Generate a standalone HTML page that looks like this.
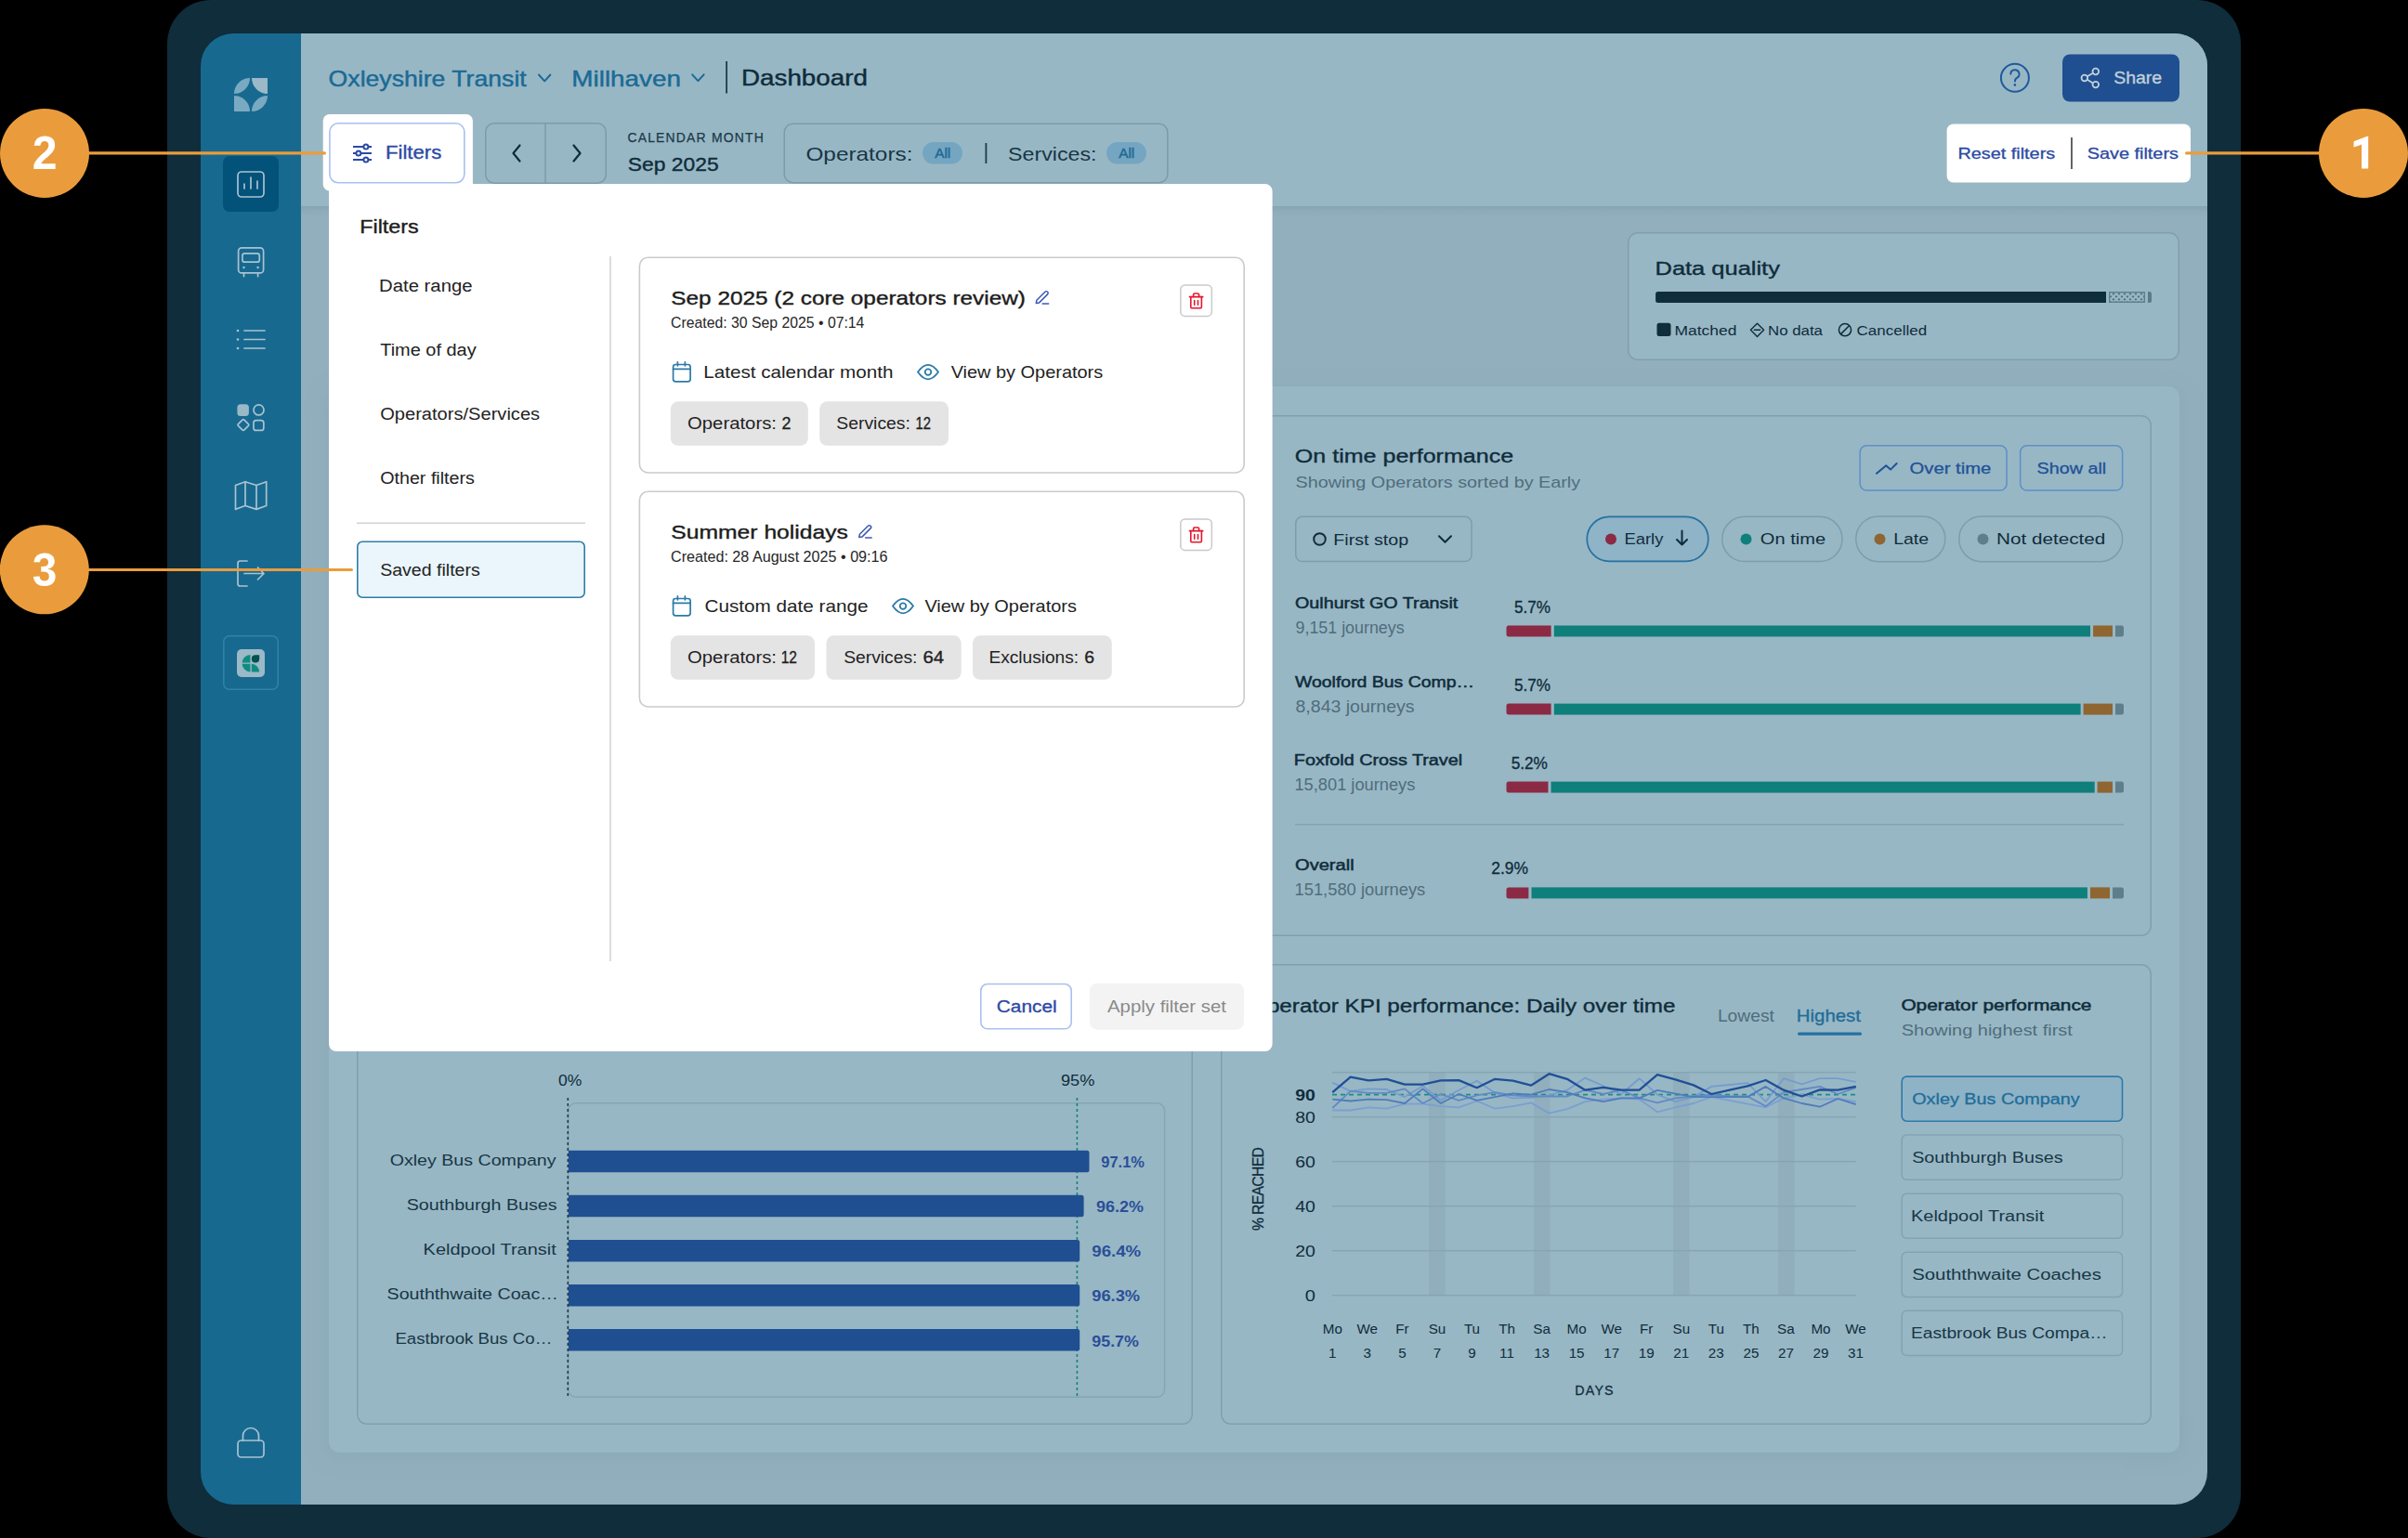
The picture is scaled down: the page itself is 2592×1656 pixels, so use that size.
<!DOCTYPE html>
<html><head><meta charset="utf-8"><title>Dashboard</title>
<style>html,body{margin:0;padding:0;background:#000;overflow:hidden}svg{display:block}text{font-family:"Liberation Sans",sans-serif;white-space:pre}</style>
</head><body>
<svg width="2592" height="1656" viewBox="0 0 2592 1656">
<rect x="180" y="0" width="2232" height="1656" rx="47" fill="#0f2d3a"/>
<defs><clipPath id="app"><rect x="216" y="36" width="2160" height="1584" rx="35"/></clipPath><linearGradient id="hsh" x1="0" y1="0" x2="0" y2="1"><stop offset="0" stop-color="#7f9dab" stop-opacity="0.6"/><stop offset="1" stop-color="#93b0bd" stop-opacity="0"/></linearGradient><filter id="psh" x="-5%" y="-5%" width="110%" height="110%"><feGaussianBlur stdDeviation="10"/></filter></defs>
<g clip-path="url(#app)">
<rect x="216" y="36" width="108" height="1584" rx="0" fill="#186990"/>
<rect x="324" y="36" width="2052" height="1584" rx="0" fill="#91afbd"/>
<rect x="324" y="36" width="2052" height="186" rx="0" fill="#98b7c5"/>
<rect x="324" y="222" width="2052" height="14" rx="0" fill="url(#hsh)"/>
<rect x="350" y="420" width="2000" height="1150" rx="12" fill="#86a4b1" filter="url(#psh)" opacity="0.5"/>
<rect x="354" y="416" width="1992" height="1148" rx="12" fill="#98b7c5"/>
<rect x="1752.75" y="250.75" width="592.5" height="136.5" rx="10.25" fill="#98b7c5" stroke="#80a0ae" stroke-width="1.5"/>
<rect x="384.75" y="447.75" width="1930.5" height="559.5" rx="10.25" fill="#98b7c5" stroke="#80a0ae" stroke-width="1.5"/>
<rect x="384.75" y="1038.75" width="898.5" height="494.5" rx="10.25" fill="#98b7c5" stroke="#80a0ae" stroke-width="1.5"/>
<rect x="1314.75" y="1038.75" width="1000.5" height="494.5" rx="10.25" fill="#98b7c5" stroke="#80a0ae" stroke-width="1.5"/>
<rect x="240" y="168" width="60" height="60" rx="7" fill="#02527a"/>
<path d="M252,101 A17 17 0 0 1 269,84 A17 17 0 0 1 252,101Z" fill="#79aac2"/>
<path d="M271,84 H288 V101 A17 17 0 0 1 271,84Z" fill="#9bb9c7"/>
<path d="M252,103 A17 17 0 0 1 269,120 H252Z" fill="#79aac2"/>
<path d="M271,120 A17 17 0 0 1 288,103 A17 17 0 0 1 271,120Z" fill="#79aac2"/>
<g fill="none" stroke="#a9c3d0" stroke-width="1.7" stroke-linecap="round" stroke-linejoin="round"><rect x="256" y="185" width="28" height="27" rx="4"/><path d="M263 203 V198 M270 203 V191 M277 203 V195"/></g>
<g fill="none" stroke="#a9c3d0" stroke-width="1.7" stroke-linecap="round" stroke-linejoin="round"><rect x="256.6" y="266.9" width="27" height="27" rx="3.5"/><rect x="260.9" y="272.9" width="18.4" height="9.3" rx="2.5"/><path d="M262.5 297.6 V294.5 M277.6 297.6 V294.5"/></g>
<circle cx="262.5" cy="288" r="1.2" fill="#a9c3d0"/><circle cx="277.6" cy="288" r="1.2" fill="#a9c3d0"/>
<g fill="none" stroke="#a9c3d0" stroke-width="1.7" stroke-linecap="round" stroke-linejoin="round"><path d="M263 356 H285 M263 365.5 H285 M263 375 H285"/></g>
<circle cx="256" cy="356" r="1.3" fill="#a9c3d0"/><circle cx="256" cy="365.5" r="1.3" fill="#a9c3d0"/><circle cx="256" cy="375" r="1.3" fill="#a9c3d0"/>
<rect x="255.4" y="435.2" width="12.5" height="12.7" rx="3.5" fill="#9ab8c6"/>
<g fill="none" stroke="#a9c3d0" stroke-width="1.7" stroke-linecap="round" stroke-linejoin="round"><circle cx="278.5" cy="441.4" r="5.5"/><rect x="272.95" y="452.65" width="10.9" height="10.8" rx="2.8"/><path d="M261.9 451.6 Q262.4 451.6 262.9 452.1 L267.4 456.6 Q268.2 457.5 267.4 458.4 L262.9 462.9 Q261.9 463.9 260.9 462.9 L256.4 458.4 Q255.6 457.5 256.4 456.6 L260.9 452.1 Q261.4 451.6 261.9 451.6Z"/></g>
<g fill="none" stroke="#a9c3d0" stroke-width="1.7" stroke-linecap="round" stroke-linejoin="round"><path d="M253.5 522.5 L264 518.7 L276 522.5 L286.7 518.7 V544.5 L276 548.4 L264 544.5 L253.5 548.4Z M264 518.7 V544.5 M276 522.5 V548.4"/></g>
<g fill="none" stroke="#a9c3d0" stroke-width="1.7" stroke-linecap="round" stroke-linejoin="round"><path d="M266 604 H258.5 Q256 604 256 606.5 V628.5 Q256 631 258.5 631 H266 M263 617.5 H284 M277.5 611 L284 617.5 L277.5 624"/></g>
<rect x="240.75" y="684.75" width="58.5" height="57.5" rx="6.25" fill="none" stroke="#2f83ab" stroke-width="1.5"/>
<rect x="255" y="699" width="30" height="30" rx="5" fill="#9bb9c7"/>
<path d="M269.4 705 A9 9 0 0 0 260.6 713.6 H269.4Z M269.4 723.4 A9 9 0 0 1 260.6 714.8 H269.4Z M270.8 714.8 A8.6 8.6 0 0 1 279.2 723.4 H270.8Z" fill="#0f8c82"/>
<path d="M279.2 705.2 V709.5 A4.2 4.2 0 1 1 275 705.2 Z" fill="#03514f"/>
<g fill="none" stroke="#a9c3d0" stroke-width="1.7" stroke-linecap="round" stroke-linejoin="round"><rect x="256" y="1551" width="28" height="18" rx="3.5"/><path d="M261.5 1551 V1546 A8.5 8.5 0 0 1 278.5 1546 V1551"/></g>
</g>
<text x="353.61" y="93.10" font-size="24.31" fill="#1b6a94" stroke="#1b6a94" stroke-width="0.44" textLength="213.12" lengthAdjust="spacingAndGlyphs">Oxleyshire Transit</text>
<path d="M580 80.5 L586.2 87.3 L592.4 80.5" fill="none" stroke="#1b6a94" stroke-width="2" stroke-linecap="round" stroke-linejoin="round"/>
<text x="615.31" y="92.80" font-size="24.31" fill="#1b6a94" stroke="#1b6a94" stroke-width="0.44" textLength="117.73" lengthAdjust="spacingAndGlyphs">Millhaven</text>
<path d="M745.2 80.3 L751.4 87.1 L757.6 80.3" fill="none" stroke="#1b6a94" stroke-width="2" stroke-linecap="round" stroke-linejoin="round"/>
<rect x="781.2" y="66" width="1.8" height="34.5" rx="0" fill="#1b3c4b"/>
<text x="798.04" y="92.20" font-size="24.61" fill="#0f2c3a" stroke="#0f2c3a" stroke-width="0.44" textLength="135.83" lengthAdjust="spacingAndGlyphs">Dashboard</text>
<circle cx="2168.9" cy="83.8" r="15" fill="none" stroke="#1f5a9c" stroke-width="2"/>
<path d="M2164.3 79.6 A4.6 4.6 0 1 1 2170.8 84 Q2168.9 85 2168.9 87.6" fill="none" stroke="#1f5a9c" stroke-width="2" stroke-linecap="round"/>
<circle cx="2168.9" cy="91.4" r="1.3" fill="#1f5a9c"/>
<rect x="2220" y="58.5" width="126" height="51" rx="8" fill="#1f4f90"/>
<g fill="none" stroke="#c3d0da" stroke-width="1.8"><circle cx="2255.8" cy="77" r="3.3"/><circle cx="2255.8" cy="91.1" r="3.3"/><circle cx="2243.8" cy="84" r="3.3"/><path d="M2246.7 82.3 L2252.9 78.7 M2246.7 85.7 L2252.9 89.4"/></g>
<text x="2275.20" y="89.60" font-size="18.38" fill="#c3d0da" stroke="#c3d0da" stroke-width="0.33" textLength="52.03" lengthAdjust="spacingAndGlyphs">Share</text>
<rect x="522.75" y="132.75" width="129.5" height="64.5" rx="9.25" fill="none" stroke="#7c9baa" stroke-width="1.5"/>
<rect x="586.3" y="132.5" width="1.5" height="65" rx="0" fill="#7c9baa"/>
<path d="M559.5 156.5 L552.5 165 L559.5 173.5 M617.5 156.5 L624.5 165 L617.5 173.5" fill="none" stroke="#0f2c3a" stroke-width="2.2" stroke-linecap="round" stroke-linejoin="round"/>
<text x="675.40" y="152.90" font-size="13.94" fill="#1b3a48" stroke="#1b3a48" stroke-width="0.25" textLength="146.35" lengthAdjust="spacing">CALENDAR MONTH</text>
<text x="675.80" y="184.30" font-size="20.90" fill="#0f2c3a" stroke="#0f2c3a" stroke-width="0.38" textLength="97.88" lengthAdjust="spacingAndGlyphs">Sep 2025</text>
<rect x="844.25" y="133.25" width="412.5999999999999" height="63.5" rx="9.25" fill="none" stroke="#7c9baa" stroke-width="1.5"/>
<text x="867.40" y="172.80" font-size="20.90" fill="#173644" textLength="115.10" lengthAdjust="spacingAndGlyphs">Operators:</text>
<rect x="993" y="153" width="43" height="23.6" rx="11.8" fill="#74a6c1"/>
<text x="1006.20" y="169.90" font-size="13.94" fill="#1f6a95" stroke="#1f6a95" stroke-width="0.42" textLength="17.10" lengthAdjust="spacingAndGlyphs">All</text>
<rect x="1060.5" y="154" width="1.8" height="22" rx="0" fill="#1b3c4b"/>
<text x="1085.00" y="172.80" font-size="20.90" fill="#173644" textLength="95.51" lengthAdjust="spacingAndGlyphs">Services:</text>
<rect x="1191" y="153" width="43" height="23.6" rx="11.8" fill="#74a6c1"/>
<text x="1204.20" y="169.90" font-size="13.94" fill="#1f6a95" stroke="#1f6a95" stroke-width="0.42" textLength="17.10" lengthAdjust="spacingAndGlyphs">All</text>
<rect x="2095.6" y="133.4" width="262.4" height="63.1" rx="7" fill="#fff"/>
<text x="2107.45" y="170.90" font-size="17.20" fill="#2c4aa3" stroke="#2c4aa3" stroke-width="0.31" textLength="104.74" lengthAdjust="spacingAndGlyphs">Reset filters</text>
<rect x="2229.2" y="148" width="1.5" height="34" rx="0" fill="#333"/>
<text x="2246.70" y="170.90" font-size="17.20" fill="#2c4aa3" stroke="#2c4aa3" stroke-width="0.31" textLength="98.29" lengthAdjust="spacingAndGlyphs">Save filters</text>
<text x="1781.52" y="295.90" font-size="19.87" fill="#0f2c3a" stroke="#0f2c3a" stroke-width="0.36" textLength="134.39" lengthAdjust="spacingAndGlyphs">Data quality</text>
<path d="M1784.6 314 H2267 V326 H1784.6 A2.5 2.5 0 0 1 1782.1 323.5 V316.5 A2.5 2.5 0 0 1 1784.6 314Z" fill="#0f2d3b"/>
<defs><pattern id="dots" x="2273.9" y="315.6" width="6" height="6" patternUnits="userSpaceOnUse"><rect width="6" height="6" fill="#98b7c5"/><rect x="0" y="0" width="2.1" height="1.4" fill="#35535f"/><rect x="3" y="3" width="2.1" height="1.4" fill="#35535f"/></pattern></defs>
<rect x="2270.7" y="314.7" width="37.6" height="10.6" rx="0" fill="url(#dots)" stroke="#5f7f8c" stroke-width="1.4"/>
<path d="M2312 314 H2313.5 A2.5 2.5 0 0 1 2316 316.5 V323.5 A2.5 2.5 0 0 1 2313.5 326 H2312Z" fill="#5a7a87"/>
<rect x="1783.5" y="347.7" width="15" height="14.3" rx="2.5" fill="#0f2d3b"/>
<text x="1802.50" y="360.70" font-size="14.53" fill="#0f2c3a" textLength="66.89" lengthAdjust="spacingAndGlyphs">Matched</text>
<path d="M1891.5 348.2 L1898.6 355.3 L1891.5 362.4 L1884.4 355.3Z M1887.8 355.3 H1895.2" fill="none" stroke="#0f2c3a" stroke-width="1.4" stroke-linejoin="round"/>
<text x="1903.04" y="360.70" font-size="14.53" fill="#0f2c3a" textLength="58.88" lengthAdjust="spacingAndGlyphs">No data</text>
<circle cx="1986" cy="355.2" r="6.6" fill="none" stroke="#0f2c3a" stroke-width="1.5"/><path d="M1981.6 359.6 L1990.4 350.8" stroke="#0f2c3a" stroke-width="1.5"/>
<text x="1998.60" y="360.70" font-size="14.53" fill="#0f2c3a" textLength="75.49" lengthAdjust="spacingAndGlyphs">Cancelled</text>
<text x="1393.80" y="497.90" font-size="19.57" fill="#0f2c3a" stroke="#0f2c3a" stroke-width="0.35" textLength="235.32" lengthAdjust="spacingAndGlyphs">On time performance</text>
<text x="1394.50" y="524.80" font-size="17.35" fill="#4f6d7b" textLength="306.62" lengthAdjust="spacingAndGlyphs">Showing Operators sorted by Early</text>
<rect x="2002.15" y="479.65" width="157.9000000000001" height="48.39999999999998" rx="7.25" fill="none" stroke="#5f8fc6" stroke-width="1.5"/>
<path d="M2020 509.8 L2030.2 501.3 L2035 505.6 L2041.6 499" fill="none" stroke="#1f5298" stroke-width="2" stroke-linecap="round" stroke-linejoin="round"/>
<text x="2055.60" y="509.60" font-size="16.75" fill="#1f5298" stroke="#1f5298" stroke-width="0.30" textLength="87.68" lengthAdjust="spacingAndGlyphs">Over time</text>
<rect x="2174.65" y="479.65" width="110.0" height="48.39999999999998" rx="7.25" fill="none" stroke="#5f8fc6" stroke-width="1.5"/>
<text x="2192.60" y="509.60" font-size="16.75" fill="#1f5298" stroke="#1f5298" stroke-width="0.30" textLength="74.65" lengthAdjust="spacingAndGlyphs">Show all</text>
<rect x="1394.75" y="556.35" width="189.29999999999995" height="48.19999999999993" rx="7.25" fill="none" stroke="#7e9dab" stroke-width="1.5"/>
<circle cx="1420.5" cy="580.5" r="6.3" fill="#8fadba" stroke="#0f2c3a" stroke-width="2"/>
<text x="1435.36" y="586.50" font-size="17.20" fill="#0f2c3a" textLength="80.68" lengthAdjust="spacingAndGlyphs">First stop</text>
<path d="M1549 577.2 L1555.5 583.7 L1562 577.2" fill="none" stroke="#0f2c3a" stroke-width="2" stroke-linecap="round" stroke-linejoin="round"/>
<rect x="1708.25" y="556.45" width="130.59999999999997" height="47.99999999999993" rx="23.95" fill="#8fb3c7" stroke="#2671a0" stroke-width="1.7"/>
<circle cx="1734" cy="580.5" r="6" fill="#8b2a44"/>
<text x="1748.41" y="586.30" font-size="16.90" fill="#0f2c3a" textLength="41.99" lengthAdjust="spacingAndGlyphs">Early</text>
<path d="M1810.5 571.5 V586.5 M1805 581 L1810.5 586.5 L1816 581" fill="none" stroke="#0f2c3a" stroke-width="2" stroke-linecap="round" stroke-linejoin="round"/>
<rect x="1853.75" y="556.35" width="129.20000000000005" height="48.19999999999993" rx="24.05" fill="none" stroke="#7e9dab" stroke-width="1.5"/>
<circle cx="1879.5" cy="580.5" r="6" fill="#0f7f7b"/>
<text x="1894.80" y="586.30" font-size="16.90" fill="#0f2c3a" textLength="70.27" lengthAdjust="spacingAndGlyphs">On time</text>
<rect x="1997.75" y="556.05" width="96.0" height="48.60000000000002" rx="24.05" fill="none" stroke="#7e9dab" stroke-width="1.5"/>
<circle cx="2023.5" cy="580.5" r="6" fill="#8f6531"/>
<text x="2038.15" y="586.30" font-size="16.90" fill="#0f2c3a" textLength="37.91" lengthAdjust="spacingAndGlyphs">Late</text>
<rect x="2108.75" y="556.05" width="175.9000000000001" height="48.60000000000002" rx="24.05" fill="none" stroke="#7e9dab" stroke-width="1.5"/>
<circle cx="2134.5" cy="580.5" r="6" fill="#5f7e8b"/>
<text x="2149.08" y="586.30" font-size="16.90" fill="#0f2c3a" textLength="117.21" lengthAdjust="spacingAndGlyphs">Not detected</text>
<text x="1394.00" y="655.00" font-size="16.75" fill="#0f2c3a" stroke="#0f2c3a" stroke-width="0.50" textLength="175.29" lengthAdjust="spacingAndGlyphs">Oulhurst GO Transit</text>
<text x="1394.50" y="682.40" font-size="17.94" fill="#4f6d7b" textLength="117.16" lengthAdjust="spacingAndGlyphs">9,151 journeys</text>
<text x="1630.00" y="660.00" font-size="17.94" fill="#0f2c3a" stroke="#0f2c3a" stroke-width="0.32" textLength="38.94" lengthAdjust="spacingAndGlyphs">5.7%</text>
<path d="M1624.0 673.5 H1669.6 V685.5 H1624.0 A2.5 2.5 0 0 1 1621.5 683.0 V676.0 A2.5 2.5 0 0 1 1624.0 673.5Z" fill="#8b2a44"/>
<rect x="1672.8" y="673.5" width="577.2" height="12" rx="0" fill="#0f7f7b"/>
<rect x="2253.1" y="673.5" width="20.90000000000009" height="12" rx="0" fill="#8f6531"/>
<path d="M2277.0 673.5 H2283.5 A2.5 2.5 0 0 1 2286.0 676.0 V683.0 A2.5 2.5 0 0 1 2283.5 685.5 H2277.0Z" fill="#5f7e8b"/>
<text x="1394.00" y="739.60" font-size="16.75" fill="#0f2c3a" stroke="#0f2c3a" stroke-width="0.50" textLength="193.03" lengthAdjust="spacingAndGlyphs">Woolford Bus Comp…</text>
<text x="1394.50" y="766.60" font-size="17.94" fill="#4f6d7b" textLength="128.06" lengthAdjust="spacingAndGlyphs">8,843 journeys</text>
<text x="1630.00" y="744.30" font-size="17.94" fill="#0f2c3a" stroke="#0f2c3a" stroke-width="0.32" textLength="38.94" lengthAdjust="spacingAndGlyphs">5.7%</text>
<path d="M1624.0 757.6 H1669.6 V769.6 H1624.0 A2.5 2.5 0 0 1 1621.5 767.1 V760.1 A2.5 2.5 0 0 1 1624.0 757.6Z" fill="#8b2a44"/>
<rect x="1672.8" y="757.6" width="566.8" height="12" rx="0" fill="#0f7f7b"/>
<rect x="2242.6" y="757.6" width="31.40000000000009" height="12" rx="0" fill="#8f6531"/>
<path d="M2277.0 757.6 H2283.5 A2.5 2.5 0 0 1 2286.0 760.1 V767.1 A2.5 2.5 0 0 1 2283.5 769.6 H2277.0Z" fill="#5f7e8b"/>
<text x="1392.82" y="823.60" font-size="16.75" fill="#0f2c3a" stroke="#0f2c3a" stroke-width="0.50" textLength="181.33" lengthAdjust="spacingAndGlyphs">Foxfold Cross Travel</text>
<text x="1393.48" y="850.80" font-size="17.94" fill="#4f6d7b" textLength="129.88" lengthAdjust="spacingAndGlyphs">15,801 journeys</text>
<text x="1626.70" y="828.30" font-size="17.94" fill="#0f2c3a" stroke="#0f2c3a" stroke-width="0.32" textLength="39.24" lengthAdjust="spacingAndGlyphs">5.2%</text>
<path d="M1624.0 841.6 H1666.5 V853.6 H1624.0 A2.5 2.5 0 0 1 1621.5 851.1 V844.1 A2.5 2.5 0 0 1 1624.0 841.6Z" fill="#8b2a44"/>
<rect x="1669.5" y="841.6" width="585.1999999999998" height="12" rx="0" fill="#0f7f7b"/>
<rect x="2257.6" y="841.6" width="16.40000000000009" height="12" rx="0" fill="#8f6531"/>
<path d="M2277.0 841.6 H2283.5 A2.5 2.5 0 0 1 2286.0 844.1 V851.1 A2.5 2.5 0 0 1 2283.5 853.6 H2277.0Z" fill="#5f7e8b"/>
<text x="1394.00" y="936.80" font-size="16.75" fill="#0f2c3a" stroke="#0f2c3a" stroke-width="0.50" textLength="63.67" lengthAdjust="spacingAndGlyphs">Overall</text>
<text x="1393.48" y="964.40" font-size="17.94" fill="#4f6d7b" textLength="140.78" lengthAdjust="spacingAndGlyphs">151,580 journeys</text>
<text x="1605.30" y="941.10" font-size="17.94" fill="#0f2c3a" stroke="#0f2c3a" stroke-width="0.32" textLength="39.64" lengthAdjust="spacingAndGlyphs">2.9%</text>
<path d="M1624.0 955.4 H1645.4 V967.4 H1624.0 A2.5 2.5 0 0 1 1621.5 964.9 V957.9 A2.5 2.5 0 0 1 1624.0 955.4Z" fill="#8b2a44"/>
<rect x="1648.5" y="955.4" width="598.4000000000001" height="12" rx="0" fill="#0f7f7b"/>
<rect x="2250" y="955.4" width="21" height="12" rx="0" fill="#8f6531"/>
<path d="M2274.0 955.4 H2283.5 A2.5 2.5 0 0 1 2286.0 957.9 V964.9 A2.5 2.5 0 0 1 2283.5 967.4 H2274.0Z" fill="#5f7e8b"/>
<rect x="1394" y="887" width="892" height="1.5" rx="0" fill="#84a3b1"/>
<text x="601.00" y="1168.60" font-size="17.20" fill="#0f2c3a" textLength="25.29" lengthAdjust="spacingAndGlyphs">0%</text>
<text x="1142.00" y="1168.60" font-size="17.20" fill="#0f2c3a" textLength="36.30" lengthAdjust="spacingAndGlyphs">95%</text>
<rect x="611.7" y="1187.7" width="641.9" height="316.6" rx="8.3" fill="none" stroke="#86a5b3" stroke-width="1.4"/>
<path d="M611.3 1182 V1505" stroke="#1f3b48" stroke-width="1.6" stroke-dasharray="3 3"/>
<path d="M1159.4 1182 V1505" stroke="#17827a" stroke-width="1.6" stroke-dasharray="3 3"/>
<path d="M612 1238.8 H1170.0 A2.5 2.5 0 0 1 1172.5 1241.3 V1259.8 A2.5 2.5 0 0 1 1170.0 1262.3 H612Z" fill="#1f4f91"/>
<text x="419.70" y="1254.60" font-size="17.20" fill="#173644" textLength="178.84" lengthAdjust="spacingAndGlyphs">Oxley Bus Company</text>
<text x="1185.30" y="1257.30" font-size="16.75" fill="#2a4f98" font-weight="bold" textLength="46.60" lengthAdjust="spacingAndGlyphs">97.1%</text>
<path d="M612 1286.8 H1164.1 A2.5 2.5 0 0 1 1166.6 1289.3 V1307.8 A2.5 2.5 0 0 1 1164.1 1310.3 H612Z" fill="#1f4f91"/>
<text x="437.70" y="1302.65" font-size="17.20" fill="#173644" textLength="161.98" lengthAdjust="spacingAndGlyphs">Southburgh Buses</text>
<text x="1180.00" y="1305.35" font-size="16.75" fill="#2a4f98" font-weight="bold" textLength="50.89" lengthAdjust="spacingAndGlyphs">96.2%</text>
<path d="M612 1334.9 H1159.7 A2.5 2.5 0 0 1 1162.2 1337.4 V1355.9 A2.5 2.5 0 0 1 1159.7 1358.4 H612Z" fill="#1f4f91"/>
<text x="455.64" y="1350.70" font-size="17.20" fill="#173644" textLength="143.10" lengthAdjust="spacingAndGlyphs">Keldpool Transit</text>
<text x="1175.30" y="1353.40" font-size="16.75" fill="#2a4f98" font-weight="bold" textLength="52.88" lengthAdjust="spacingAndGlyphs">96.4%</text>
<path d="M612 1382.9 H1159.7 A2.5 2.5 0 0 1 1162.2 1385.4 V1403.9 A2.5 2.5 0 0 1 1159.7 1406.4 H612Z" fill="#1f4f91"/>
<text x="416.60" y="1398.75" font-size="17.20" fill="#173644" textLength="184.30" lengthAdjust="spacingAndGlyphs">Souththwaite Coac…</text>
<text x="1175.30" y="1401.45" font-size="16.75" fill="#2a4f98" font-weight="bold" textLength="51.78" lengthAdjust="spacingAndGlyphs">96.3%</text>
<path d="M612 1431.0 H1159.7 A2.5 2.5 0 0 1 1162.2 1433.5 V1452.0 A2.5 2.5 0 0 1 1159.7 1454.5 H612Z" fill="#1f4f91"/>
<text x="425.41" y="1446.80" font-size="17.20" fill="#173644" textLength="168.96" lengthAdjust="spacingAndGlyphs">Eastbrook Bus Co…</text>
<text x="1175.30" y="1449.50" font-size="16.75" fill="#2a4f98" font-weight="bold" textLength="50.59" lengthAdjust="spacingAndGlyphs">95.7%</text>
<text x="1345.00" y="1090.30" font-size="19.72" fill="#0f2c3a" stroke="#0f2c3a" stroke-width="0.35" textLength="458.55" lengthAdjust="spacingAndGlyphs">Operator KPI performance: Daily over time</text>
<text x="1848.91" y="1099.70" font-size="17.64" fill="#4f6d7b" textLength="60.98" lengthAdjust="spacingAndGlyphs">Lowest</text>
<text x="1933.84" y="1099.70" font-size="17.64" fill="#1f6d98" stroke="#1f6d98" stroke-width="0.32" textLength="69.04" lengthAdjust="spacingAndGlyphs">Highest</text>
<rect x="1935" y="1111.5" width="69" height="3.2" rx="1.5" fill="#2671a0"/>
<text x="2046.40" y="1087.80" font-size="17.20" fill="#0f2c3a" stroke="#0f2c3a" stroke-width="0.52" textLength="205.08" lengthAdjust="spacingAndGlyphs">Operator performance</text>
<text x="2046.80" y="1114.60" font-size="16.90" fill="#4f6d7b" textLength="184.04" lengthAdjust="spacingAndGlyphs">Showing highest first</text>
<rect x="2047.2" y="1159.1" width="237.3000000000001" height="48.100000000000044" rx="5.2" fill="#8eb3c7" stroke="#2e7aa8" stroke-width="1.6"/>
<text x="2058.20" y="1189.20" font-size="16.46" fill="#1f6d98" stroke="#1f6d98" stroke-width="0.30" textLength="180.56" lengthAdjust="spacingAndGlyphs">Oxley Bus Company</text>
<rect x="2047.15" y="1222.1" width="237.4000000000001" height="48.200000000000045" rx="5.25" fill="none" stroke="#84a3b1" stroke-width="1.5"/>
<text x="2058.20" y="1252.25" font-size="16.46" fill="#173644" textLength="162.46" lengthAdjust="spacingAndGlyphs">Southburgh Buses</text>
<rect x="2047.15" y="1285.1499999999999" width="237.4000000000001" height="48.200000000000045" rx="5.25" fill="none" stroke="#84a3b1" stroke-width="1.5"/>
<text x="2056.99" y="1315.30" font-size="16.46" fill="#173644" textLength="143.29" lengthAdjust="spacingAndGlyphs">Keldpool Transit</text>
<rect x="2047.15" y="1348.1999999999998" width="237.4000000000001" height="48.200000000000045" rx="5.25" fill="none" stroke="#84a3b1" stroke-width="1.5"/>
<text x="2058.20" y="1378.35" font-size="16.46" fill="#173644" textLength="203.67" lengthAdjust="spacingAndGlyphs">Souththwaite Coaches</text>
<rect x="2047.15" y="1411.25" width="237.4000000000001" height="48.200000000000045" rx="5.25" fill="none" stroke="#84a3b1" stroke-width="1.5"/>
<text x="2057.03" y="1441.40" font-size="16.46" fill="#173644" textLength="211.35" lengthAdjust="spacingAndGlyphs">Eastbrook Bus Compa…</text>
<rect x="1538" y="1154.6" width="17.6" height="240.1" rx="0" fill="#90aebc"/>
<rect x="1651" y="1154.6" width="17.6" height="240.1" rx="0" fill="#90aebc"/>
<rect x="1801" y="1154.6" width="17.6" height="240.1" rx="0" fill="#90aebc"/>
<rect x="1914" y="1154.6" width="17.6" height="240.1" rx="0" fill="#90aebc"/>
<rect x="1433.7" y="1153.95" width="564" height="1.4" rx="0" fill="#86a5b3"/>
<rect x="1433.7" y="1201.96" width="564" height="1.4" rx="0" fill="#86a5b3"/>
<rect x="1433.7" y="1249.97" width="564" height="1.4" rx="0" fill="#86a5b3"/>
<rect x="1433.7" y="1297.98" width="564" height="1.4" rx="0" fill="#86a5b3"/>
<rect x="1433.7" y="1345.99" width="564" height="1.4" rx="0" fill="#86a5b3"/>
<rect x="1433.7" y="1394.0" width="564" height="1.4" rx="0" fill="#86a5b3"/>
<text x="1394.20" y="1184.90" font-size="17.20" fill="#0f2c3a" font-weight="bold" textLength="21.63" lengthAdjust="spacingAndGlyphs">90</text>
<text x="1394.20" y="1209.10" font-size="17.20" fill="#0f2c3a" textLength="21.63" lengthAdjust="spacingAndGlyphs">80</text>
<text x="1394.20" y="1257.00" font-size="17.20" fill="#0f2c3a" textLength="21.63" lengthAdjust="spacingAndGlyphs">60</text>
<text x="1394.20" y="1305.00" font-size="17.20" fill="#0f2c3a" textLength="21.63" lengthAdjust="spacingAndGlyphs">40</text>
<text x="1394.20" y="1353.00" font-size="17.20" fill="#0f2c3a" textLength="21.63" lengthAdjust="spacingAndGlyphs">20</text>
<text x="1404.70" y="1400.90" font-size="17.20" fill="#0f2c3a" textLength="11.15" lengthAdjust="spacingAndGlyphs">0</text>
<path d="M1434 1178.6 H1997.6" stroke="#17907f" stroke-width="1.6" stroke-dasharray="5 4"/>
<text x="1434.3" y="1435.6" font-size="15.2" fill="#0f2c3a" text-anchor="middle">Mo</text>
<text x="1434.3" y="1462.3" font-size="15.2" fill="#0f2c3a" text-anchor="middle">1</text>
<text x="1471.8" y="1435.6" font-size="15.2" fill="#0f2c3a" text-anchor="middle">We</text>
<text x="1471.8" y="1462.3" font-size="15.2" fill="#0f2c3a" text-anchor="middle">3</text>
<text x="1509.4" y="1435.6" font-size="15.2" fill="#0f2c3a" text-anchor="middle">Fr</text>
<text x="1509.4" y="1462.3" font-size="15.2" fill="#0f2c3a" text-anchor="middle">5</text>
<text x="1547.0" y="1435.6" font-size="15.2" fill="#0f2c3a" text-anchor="middle">Su</text>
<text x="1547.0" y="1462.3" font-size="15.2" fill="#0f2c3a" text-anchor="middle">7</text>
<text x="1584.5" y="1435.6" font-size="15.2" fill="#0f2c3a" text-anchor="middle">Tu</text>
<text x="1584.5" y="1462.3" font-size="15.2" fill="#0f2c3a" text-anchor="middle">9</text>
<text x="1622.0" y="1435.6" font-size="15.2" fill="#0f2c3a" text-anchor="middle">Th</text>
<text x="1622.0" y="1462.3" font-size="15.2" fill="#0f2c3a" text-anchor="middle">11</text>
<text x="1659.6" y="1435.6" font-size="15.2" fill="#0f2c3a" text-anchor="middle">Sa</text>
<text x="1659.6" y="1462.3" font-size="15.2" fill="#0f2c3a" text-anchor="middle">13</text>
<text x="1697.1" y="1435.6" font-size="15.2" fill="#0f2c3a" text-anchor="middle">Mo</text>
<text x="1697.1" y="1462.3" font-size="15.2" fill="#0f2c3a" text-anchor="middle">15</text>
<text x="1734.7" y="1435.6" font-size="15.2" fill="#0f2c3a" text-anchor="middle">We</text>
<text x="1734.7" y="1462.3" font-size="15.2" fill="#0f2c3a" text-anchor="middle">17</text>
<text x="1772.2" y="1435.6" font-size="15.2" fill="#0f2c3a" text-anchor="middle">Fr</text>
<text x="1772.2" y="1462.3" font-size="15.2" fill="#0f2c3a" text-anchor="middle">19</text>
<text x="1809.8" y="1435.6" font-size="15.2" fill="#0f2c3a" text-anchor="middle">Su</text>
<text x="1809.8" y="1462.3" font-size="15.2" fill="#0f2c3a" text-anchor="middle">21</text>
<text x="1847.3" y="1435.6" font-size="15.2" fill="#0f2c3a" text-anchor="middle">Tu</text>
<text x="1847.3" y="1462.3" font-size="15.2" fill="#0f2c3a" text-anchor="middle">23</text>
<text x="1884.9" y="1435.6" font-size="15.2" fill="#0f2c3a" text-anchor="middle">Th</text>
<text x="1884.9" y="1462.3" font-size="15.2" fill="#0f2c3a" text-anchor="middle">25</text>
<text x="1922.4" y="1435.6" font-size="15.2" fill="#0f2c3a" text-anchor="middle">Sa</text>
<text x="1922.4" y="1462.3" font-size="15.2" fill="#0f2c3a" text-anchor="middle">27</text>
<text x="1960.0" y="1435.6" font-size="15.2" fill="#0f2c3a" text-anchor="middle">Mo</text>
<text x="1960.0" y="1462.3" font-size="15.2" fill="#0f2c3a" text-anchor="middle">29</text>
<text x="1997.5" y="1435.6" font-size="15.2" fill="#0f2c3a" text-anchor="middle">We</text>
<text x="1997.5" y="1462.3" font-size="15.2" fill="#0f2c3a" text-anchor="middle">31</text>
<text x="1695.30" y="1501.50" font-size="14.23" fill="#0f2c3a" stroke="#0f2c3a" stroke-width="0.26" textLength="41.28" lengthAdjust="spacing">DAYS</text>
<text x="1309.00" y="1286.20" font-size="15.72" fill="#0f2c3a" stroke="#0f2c3a" stroke-width="0.28" textLength="89.84" lengthAdjust="spacing" transform="rotate(-90 1354.00 1280.00)">% REACHED</text>
<polyline points="1434.3,1195.5 1453.7,1195.5 1473.2,1192.3 1492.6,1193.6 1512.0,1188.6 1531.5,1188.6 1550.9,1191.1 1570.3,1192.3 1589.7,1185.5 1609.2,1193.6 1628.6,1191.1 1648.0,1187.4 1667.5,1198.6 1686.9,1194.2 1706.3,1186.1 1725.8,1183.6 1745.2,1182.4 1764.6,1183.6 1784.0,1197.3 1803.5,1192.3 1822.9,1188.0 1842.3,1181.1 1861.8,1184.9 1881.2,1188.6 1900.6,1192.3 1920.0,1182.4 1939.5,1178.6 1958.9,1183.6 1978.3,1183.0 1997.8,1186.1" fill="none" stroke="#7b9fd0" stroke-width="1.8" stroke-linejoin="round"/>
<polyline points="1434.3,1165.6 1453.7,1174.9 1473.2,1172.4 1492.6,1173.0 1512.0,1181.1 1531.5,1169.3 1550.9,1184.9 1570.3,1173.7 1589.7,1163.7 1609.2,1176.8 1628.6,1182.4 1648.0,1181.8 1667.5,1179.3 1686.9,1173.7 1706.3,1160.6 1725.8,1169.3 1745.2,1178.0 1764.6,1161.2 1784.0,1178.6 1803.5,1186.1 1822.9,1181.1 1842.3,1169.9 1861.8,1168.0 1881.2,1166.2 1900.6,1186.1 1920.0,1161.2 1939.5,1167.4 1958.9,1161.2 1978.3,1161.2 1997.8,1164.9" fill="none" stroke="#759ccf" stroke-width="1.8" stroke-linejoin="round"/>
<polyline points="1434.3,1193.0 1453.7,1174.9 1473.2,1176.8 1492.6,1176.8 1512.0,1172.4 1531.5,1188.0 1550.9,1178.0 1570.3,1184.9 1589.7,1179.3 1609.2,1176.1 1628.6,1179.3 1648.0,1180.5 1667.5,1180.5 1686.9,1180.5 1706.3,1173.7 1725.8,1178.0 1745.2,1173.7 1764.6,1182.4 1784.0,1187.4 1803.5,1182.4 1822.9,1180.5 1842.3,1178.6 1861.8,1180.5 1881.2,1180.5 1900.6,1191.1 1920.0,1176.1 1939.5,1173.0 1958.9,1169.9 1978.3,1178.0 1997.8,1171.2" fill="none" stroke="#628ac4" stroke-width="1.8" stroke-linejoin="round"/>
<polyline points="1434.3,1183.6 1453.7,1185.5 1473.2,1183.6 1492.6,1184.2 1512.0,1188.0 1531.5,1172.4 1550.9,1188.0 1570.3,1178.0 1589.7,1184.9 1609.2,1181.1 1628.6,1177.4 1648.0,1178.6 1667.5,1173.0 1686.9,1176.1 1706.3,1182.4 1725.8,1186.1 1745.2,1182.4 1764.6,1182.4 1784.0,1173.9 1803.5,1177.6 1822.9,1181.1 1842.3,1181.1 1861.8,1181.1 1881.2,1181.1 1900.6,1169.9 1920.0,1182.4 1939.5,1188.0 1958.9,1191.7 1978.3,1183.0 1997.8,1189.2" fill="none" stroke="#4f7cbb" stroke-width="1.8" stroke-linejoin="round"/>
<polyline points="1434.3,1176.1 1453.7,1159.7 1473.2,1163.4 1492.6,1161.8 1512.0,1167.7 1531.5,1167.7 1550.9,1163.4 1570.3,1163.1 1589.7,1171.2 1609.2,1161.8 1628.6,1163.7 1648.0,1168.7 1667.5,1156.2 1686.9,1161.8 1706.3,1173.7 1725.8,1170.9 1745.2,1173.7 1764.6,1173.7 1784.0,1157.2 1803.5,1162.4 1822.9,1168.4 1842.3,1178.0 1861.8,1173.7 1881.2,1169.3 1900.6,1163.0 1920.0,1173.7 1939.5,1180.5 1958.9,1173.4 1978.3,1173.7 1997.8,1169.9" fill="none" stroke="#1f4f96" stroke-width="2.3" stroke-linejoin="round"/>
<path d="M355 123 H501.9 A7 7 0 0 1 508.9 130 V198 H1361.6 A8 8 0 0 1 1369.6 206 V1124 A8 8 0 0 1 1361.6 1132 H362 A8 8 0 0 1 354 1124 V205.5 H355 A7 7 0 0 1 347.7 198.5 V130 A7 7 0 0 1 354.7 123Z" fill="#fff"/>
<rect x="354.90000000000003" y="132.8" width="144.99999999999997" height="63.99999999999999" rx="9.2" fill="#fff" stroke="#a9c0f0" stroke-width="1.6"/>
<g fill="none" stroke="#2c4aa3" stroke-width="2" stroke-linecap="butt"><path d="M380 157.9 H391.4 M396.4 157.9 H400 M380 164.9 H383.4 M388.4 164.9 H400 M380 171.9 H391.4 M396.4 171.9 H400"/><circle cx="393.9" cy="157.9" r="2.5"/><circle cx="385.9" cy="164.9" r="2.5"/><circle cx="393.9" cy="171.9" r="2.5"/></g>
<text x="414.98" y="170.60" font-size="19.87" fill="#2c4aa3" stroke="#2c4aa3" stroke-width="0.36" textLength="60.34" lengthAdjust="spacingAndGlyphs">Filters</text>
<text x="387.17" y="250.60" font-size="20.76" fill="#1c1c1c" stroke="#1c1c1c" stroke-width="0.37" textLength="63.65" lengthAdjust="spacingAndGlyphs">Filters</text>
<text x="408.07" y="313.70" font-size="17.94" fill="#222" textLength="100.50" lengthAdjust="spacingAndGlyphs">Date range</text>
<text x="409.20" y="383.10" font-size="17.94" fill="#222" textLength="103.46" lengthAdjust="spacingAndGlyphs">Time of day</text>
<text x="409.20" y="452.00" font-size="17.94" fill="#222" textLength="171.96" lengthAdjust="spacingAndGlyphs">Operators/Services</text>
<text x="409.20" y="521.30" font-size="17.94" fill="#222" textLength="101.76" lengthAdjust="spacingAndGlyphs">Other filters</text>
<rect x="384" y="562.5" width="246" height="1.6" rx="0" fill="#d4d4d4"/>
<rect x="384.8" y="583.3" width="244.4" height="59.9" rx="5.2" fill="#eaf6fc" stroke="#2f7ca4" stroke-width="1.6"/>
<text x="409.20" y="619.60" font-size="17.94" fill="#222" textLength="107.56" lengthAdjust="spacingAndGlyphs">Saved filters</text>
<rect x="656.2" y="276" width="1.6" height="759" rx="0" fill="#d4d4d4"/>
<rect x="688.4" y="277.2" width="650.8" height="231.80000000000004" rx="9.2" fill="#fff" stroke="#cbcbcb" stroke-width="1.6"/>
<text x="722.30" y="328.20" font-size="20.90" fill="#1c1c1c" stroke="#1c1c1c" stroke-width="0.38" textLength="381.61" lengthAdjust="spacingAndGlyphs">Sep 2025 (2 core operators review)</text>
<g fill="none" stroke="#3d58b6" stroke-width="1.5" stroke-linejoin="round" stroke-linecap="round"><path d="M1115.3 326.6 L1115.9 323.2 L1124.9 314.2 A1.9 1.9 0 0 1 1127.6 316.9 L1118.6 325.9 Z"/><path d="M1122.1 326.9 H1128.7"/></g>
<rect x="1270.85" y="306.95" width="33.5" height="33.5" rx="4.75" fill="#fff" stroke="#c9c9c9" stroke-width="1.5"/><g fill="none" stroke="#e3172d" stroke-width="1.6" stroke-linecap="round" stroke-linejoin="round"><path d="M1280.4 319.6 H1294.8"/><path d="M1281.8 319.6 V330.4 Q1281.8 331.8 1283.2 331.8 H1292.0 Q1293.4 331.8 1293.4 330.4 V319.6"/><path d="M1284.6 319.6 V317.2 A1.2 1.2 0 0 1 1285.8 316.0 H1289.4 A1.2 1.2 0 0 1 1290.6 317.2 V319.6"/><path d="M1285.7 323.5 V328.2 M1289.5 323.5 V328.2"/></g>
<text x="722.00" y="352.50" font-size="16.60" fill="#262626" textLength="208.42" lengthAdjust="spacingAndGlyphs">Created: 30 Sep 2025 • 07:14</text>
<g fill="none" stroke="#2a7aa8" stroke-width="1.7" stroke-linecap="round"><rect x="724.6" y="392.5" width="18.5" height="18.3" rx="2.6"/><path d="M724.6 397.4 H743.1 M729.4 389.8 V393.8 M737.4 389.8 V393.8"/></g>
<text x="757.32" y="406.70" font-size="17.49" fill="#222" textLength="204.13" lengthAdjust="spacingAndGlyphs">Latest calendar month</text>
<g fill="none" stroke="#2a7aa8" stroke-width="1.8"><path d="M988.0 400.6 Q999.0 385.1 1010.0 400.6 Q999.0 416.1 988.0 400.6 Z"/><circle cx="999.0" cy="400.6" r="3.3"/></g>
<text x="1023.70" y="406.70" font-size="17.49" fill="#222" textLength="163.51" lengthAdjust="spacingAndGlyphs">View by Operators</text>
<rect x="721.8" y="432.3" width="148.0" height="47.5" rx="8" fill="#e4e4e4"/><text x="740.00" y="461.90" font-size="18.09" fill="#1f1f1f" textLength="95.95" lengthAdjust="spacingAndGlyphs">Operators:</text><text x="841.50" y="461.90" font-size="18.09" fill="#1f1f1f" stroke="#1f1f1f" stroke-width="0.33" textLength="9.95" lengthAdjust="spacingAndGlyphs">2</text>
<rect x="882.2" y="432.3" width="138.79999999999995" height="47.5" rx="8" fill="#e4e4e4"/><text x="900.30" y="461.90" font-size="18.09" fill="#1f1f1f" textLength="79.59" lengthAdjust="spacingAndGlyphs">Services:</text><text x="985.58" y="461.90" font-size="18.09" fill="#1f1f1f" stroke="#1f1f1f" stroke-width="0.33" textLength="16.46" lengthAdjust="spacingAndGlyphs">12</text>
<rect x="688.4" y="529.1999999999999" width="650.8" height="231.79999999999998" rx="9.2" fill="#fff" stroke="#cbcbcb" stroke-width="1.6"/>
<text x="722.30" y="580.20" font-size="20.90" fill="#1c1c1c" stroke="#1c1c1c" stroke-width="0.38" textLength="190.63" lengthAdjust="spacingAndGlyphs">Summer holidays</text>
<g fill="none" stroke="#3d58b6" stroke-width="1.5" stroke-linejoin="round" stroke-linecap="round"><path d="M924.8 578.6 L925.4 575.2 L934.4 566.2 A1.9 1.9 0 0 1 937.1 568.9 L928.1 577.9 Z"/><path d="M931.6 578.9 H938.2"/></g>
<rect x="1270.85" y="558.95" width="33.5" height="33.5" rx="4.75" fill="#fff" stroke="#c9c9c9" stroke-width="1.5"/><g fill="none" stroke="#e3172d" stroke-width="1.6" stroke-linecap="round" stroke-linejoin="round"><path d="M1280.4 571.6 H1294.8"/><path d="M1281.8 571.6 V582.4 Q1281.8 583.8 1283.2 583.8 H1292.0 Q1293.4 583.8 1293.4 582.4 V571.6"/><path d="M1284.6 571.6 V569.2 A1.2 1.2 0 0 1 1285.8 568.0 H1289.4 A1.2 1.2 0 0 1 1290.6 569.2 V571.6"/><path d="M1285.7 575.5 V580.2 M1289.5 575.5 V580.2"/></g>
<text x="722.00" y="604.50" font-size="16.60" fill="#262626" textLength="233.52" lengthAdjust="spacingAndGlyphs">Created: 28 August 2025 • 09:16</text>
<g fill="none" stroke="#2a7aa8" stroke-width="1.7" stroke-linecap="round"><rect x="724.6" y="644.5" width="18.5" height="18.3" rx="2.6"/><path d="M724.6 649.4 H743.1 M729.4 641.8 V645.8 M737.4 641.8 V645.8"/></g>
<text x="758.50" y="658.70" font-size="17.49" fill="#222" textLength="175.96" lengthAdjust="spacingAndGlyphs">Custom date range</text>
<g fill="none" stroke="#2a7aa8" stroke-width="1.8"><path d="M961.0 652.6 Q972.0 637.1 983.0 652.6 Q972.0 668.1 961.0 652.6 Z"/><circle cx="972.0" cy="652.6" r="3.3"/></g>
<text x="995.40" y="658.70" font-size="17.49" fill="#222" textLength="163.51" lengthAdjust="spacingAndGlyphs">View by Operators</text>
<rect x="721.8" y="684.3" width="155.20000000000005" height="47.5" rx="8" fill="#e4e4e4"/><text x="740.00" y="713.90" font-size="18.09" fill="#1f1f1f" textLength="95.95" lengthAdjust="spacingAndGlyphs">Operators:</text><text x="840.64" y="713.90" font-size="18.09" fill="#1f1f1f" stroke="#1f1f1f" stroke-width="0.33" textLength="17.31" lengthAdjust="spacingAndGlyphs">12</text>
<rect x="889.5" y="684.3" width="145.20000000000005" height="47.5" rx="8" fill="#e4e4e4"/><text x="908.20" y="713.90" font-size="18.09" fill="#1f1f1f" textLength="79.29" lengthAdjust="spacingAndGlyphs">Services:</text><text x="993.50" y="713.90" font-size="18.09" fill="#1f1f1f" stroke="#1f1f1f" stroke-width="0.33" textLength="22.56" lengthAdjust="spacingAndGlyphs">64</text>
<rect x="1047" y="684.3" width="149.79999999999995" height="47.5" rx="8" fill="#e4e4e4"/><text x="1064.44" y="713.90" font-size="18.09" fill="#1f1f1f" textLength="96.64" lengthAdjust="spacingAndGlyphs">Exclusions:</text><text x="1167.20" y="713.90" font-size="18.09" fill="#1f1f1f" stroke="#1f1f1f" stroke-width="0.33" textLength="10.76" lengthAdjust="spacingAndGlyphs">6</text>
<rect x="1055.8" y="1059.5" width="97.4" height="48.29999999999986" rx="7.2" fill="#fff" stroke="#a9c0f0" stroke-width="1.6"/>
<text x="1072.80" y="1090.40" font-size="18.09" fill="#2c4aa3" stroke="#2c4aa3" stroke-width="0.33" textLength="64.87" lengthAdjust="spacingAndGlyphs">Cancel</text>
<rect x="1173" y="1058.7" width="166" height="50" rx="8" fill="#f3f3f3"/>
<text x="1192.00" y="1090.40" font-size="18.09" fill="#8a8a8a" textLength="128.03" lengthAdjust="spacingAndGlyphs">Apply filter set</text>
<rect x="90" y="163.3" width="261" height="3.2" rx="1.6" fill="#ea9c3c"/>
<rect x="90" y="611.9" width="290" height="3.2" rx="1.6" fill="#ea9c3c"/>
<rect x="2352" y="163.3" width="150" height="3.2" rx="1.6" fill="#ea9c3c"/>
<circle cx="48" cy="165" r="48" fill="#ea9c3c"/><circle cx="47.8" cy="613.3" r="48" fill="#ea9c3c"/><circle cx="2544" cy="165" r="48" fill="#ea9c3c"/>
<text x="34.73" y="181.60" font-size="49.52" fill="#fff" font-weight="bold" textLength="26.76" lengthAdjust="spacingAndGlyphs">2</text>
<text x="34.74" y="630.60" font-size="49.52" fill="#fff" font-weight="bold" textLength="26.54" lengthAdjust="spacingAndGlyphs">3</text>
<path d="M2533.6 152.3 L2548 146.8 H2549.2 V181.5 H2542.1 V155.6 L2533.6 158.4Z" fill="#fff"/>
</svg></body></html>
